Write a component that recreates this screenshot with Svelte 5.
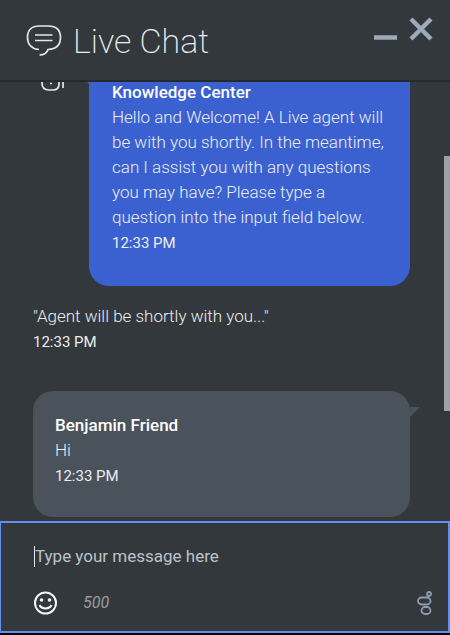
<script>
let draft = $state("");

const limit = 500;
const remaining = $derived(limit - draft.length);

const messages = [
  {
    kind: "bot",
    name: "Knowledge Center",
    text: "Hello and Welcome! A Live agent will be with you shortly. In the meantime, can I assist you with any questions you may have? Please type a question into the input field below.",
    time: "12:33 PM"
  },
  { kind: "notice", text: '"Agent will be shortly with you..."', time: "12:33 PM" },
  { kind: "user", name: "Benjamin Friend", text: "Hi", time: "12:33 PM" }
];
</script>

<div class="chat">
  <header>
    <svg class="logo" width="36" height="32" viewBox="0 0 36 32" aria-hidden="true">
      <path d="M13 24.500C6 24 1.500 19.500 1.500 12.500C1.500 5 6 1 13 1H22C30 1 34.500 5 34.500 12.500C34.500 19.500 30.500 24 22 24.500C21 28 18 30 13.500 30" />
      <path d="M9 10H26.500M9 15.500H26.500" />
    </svg>
    <h1>Live Chat</h1>
    <div class="window-buttons">
      <button aria-label="Minimize">
        <svg width="24" height="24" viewBox="0 0 24 24"><path d="M1 20.500H24" /></svg>
      </button>
      <button aria-label="Close">
        <svg width="24" height="24" viewBox="0 0 24 24"><path d="M2 2L22 22M22 2L2 22" /></svg>
      </button>
    </div>
  </header>

  <main>
    <div class="log">
      {#each messages as message}
        <div class="row {message.kind}">
          {#if message.kind === "bot"}
            <svg class="avatar" width="24" height="28" viewBox="0 0 24 28" aria-hidden="true">
              <path d="M1 6V20C1 25 4 27 8 27H12C16 27 18 25 18 21V6ZM22 12V25M9 20.500H11" />
            </svg>
          {/if}
          <div class="body">
            {#if message.name}
              <strong>{message.name}</strong>
            {/if}
            <p>{message.text}</p>
            <time>{message.time}</time>
          </div>
        </div>
      {/each}
    </div>
    <div class="track"><div class="thumb"></div></div>
  </main>

  <form class="composer">
    <div class="entry">
      <span class="caret"></span>
      <input type="text" placeholder="Type your message here" aria-label="Message" maxlength={limit} bind:value={draft}>
    </div>
    <div class="tools">
      <button type="button" aria-label="Insert emoji">
        <svg class="smiley" width="24" height="24" viewBox="0 0 24 24">
          <circle cx="11.500" cy="12" r="10.500" />
          <path d="M5.500 14C7.500 18.500 15.500 18.500 17.500 14" />
          <circle class="eye" cx="7.500" cy="9" r="1.800" />
          <circle class="eye" cx="15.500" cy="9" r="1.800" />
        </svg>
      </button>
      <span class="count">{remaining}</span>
      <button class="brand" type="button" aria-label="About this chat">
        <svg width="16" height="24" viewBox="0 0 16 24">
          <circle cx="13" cy="3" r="2" />
          <rect x="2" y="6.500" width="12.500" height="7" rx="3.500" />
          <rect x="5.500" y="16" width="9" height="7" rx="3.500" />
        </svg>
      </button>
    </div>
  </form>
</div>

<style>
:global(body) {
  margin: 0;
  background: #05070b;
}

.chat {
  display: flex;
  flex-direction: column;
  box-sizing: border-box;
  height: 100vh;
  padding-bottom: 2px;
  background-color: #05070b;
  color: #eceef1;
  font-family: Roboto, "Liberation Sans", sans-serif;
  font-size: 17px;
  font-weight: 300;
  line-height: 25px;
}

button {
  display: flex;
  padding: 0;
  border: 0;
  background: transparent;
  cursor: pointer;
}

svg {
  display: block;
  flex: none;
  fill: none;
}

header {
  display: flex;
  align-items: center;
  flex: none;
  height: 80px;
  padding: 0 17px 0 26px;
  border-bottom: 2px solid #272a2d;
  background-color: #33383c;
}

.logo {
  margin-top: 2px;
  stroke: #e6e7e8;
  stroke-width: 1.7;
}

h1 {
  flex: 1;
  margin: 2px 0 0 11px;
  font-size: 34px;
  font-weight: 200;
  line-height: 40px;
}

.window-buttons {
  display: flex;
  align-self: flex-start;
  gap: 12px;
  padding-top: 17px;
}

.window-buttons svg {
  stroke: #9caaba;
  stroke-width: 4.5;
}

main {
  display: flex;
  flex: 1;
  min-height: 0;
  background-color: #33383c;
}

/* newest message stays at the bottom, older ones slide under the header */
.log {
  display: flex;
  flex: 1;
  flex-direction: column;
  justify-content: flex-end;
  min-width: 0;
  padding: 0 34px 4px 33px;
  overflow: hidden;
}

.row {
  display: flex;
  align-items: flex-start;
  flex: none;
}

.body {
  flex: 1;
  min-width: 0;
}

.bot .body,
.user .body {
  position: relative;
  padding: 22px 22px 28px;
  border-radius: 20px;
}

.bot .body {
  margin-left: 24px;
  padding: 22px 22px 30px 23px;
  background-color: #3b61d0;
}

.user .body {
  background-color: #4a525b;
}

.bot .body::before,
.user .body::before {
  content: "";
  position: absolute;
  top: 16px;
  width: 10px;
  height: 10px;
}

.bot .body::before {
  right: 100%;
  background-color: #3b61d0;
  clip-path: polygon(0 0, 100% 0, 100% 100%);
}

.user .body::before {
  left: 100%;
  background-color: #4a525b;
  clip-path: polygon(0 0, 100% 0, 0 100%);
}

.avatar {
  margin: 5px 0 0 8px;
  stroke: #e6e7e8;
  stroke-width: 1.7;
}

.notice {
  padding: 18px 0 36px;
}

strong {
  display: block;
  color: #fff;
  font-weight: 500;
}

p {
  margin: 0;
}

time {
  display: block;
  font-size: 15px;
  font-weight: 400;
  line-height: 26px;
}

.track {
  display: flex;
  flex-direction: column;
  flex: none;
  width: 6px;
}

.thumb {
  height: 58%;
  margin-top: 74px;
  background-color: #9da2a8;
}

.composer {
  flex: none;
  padding: 19px 16px 16px 33px;
  border: 2px solid #668ef0;
  border-left-width: 1px;
  background-color: #33383c;
}

.entry {
  display: flex;
  align-items: center;
}

.caret {
  width: 1px;
  height: 21px;
  background-color: #e6e7e8;
}

input {
  flex: 1;
  min-width: 0;
  height: 28px;
  padding: 0;
  border: 0;
  outline: none;
  background: transparent;
  color: #eceef1;
  font: inherit;
  font-weight: 400;
}

input::placeholder {
  color: #bcc2ca;
  opacity: 1;
}

.tools {
  display: flex;
  align-items: center;
  margin-top: 20px;
}

.smiley {
  stroke: #f4f5f6;
  stroke-width: 2;
}

.eye {
  fill: #f4f5f6;
  stroke: none;
}

.count {
  flex: 1;
  margin-left: 25px;
  color: #9b9c9d;
  font-size: 16px;
  font-style: italic;
  font-weight: 400;
}

.brand svg {
  stroke: #8e9dad;
  stroke-width: 1.8;
}
</style>
